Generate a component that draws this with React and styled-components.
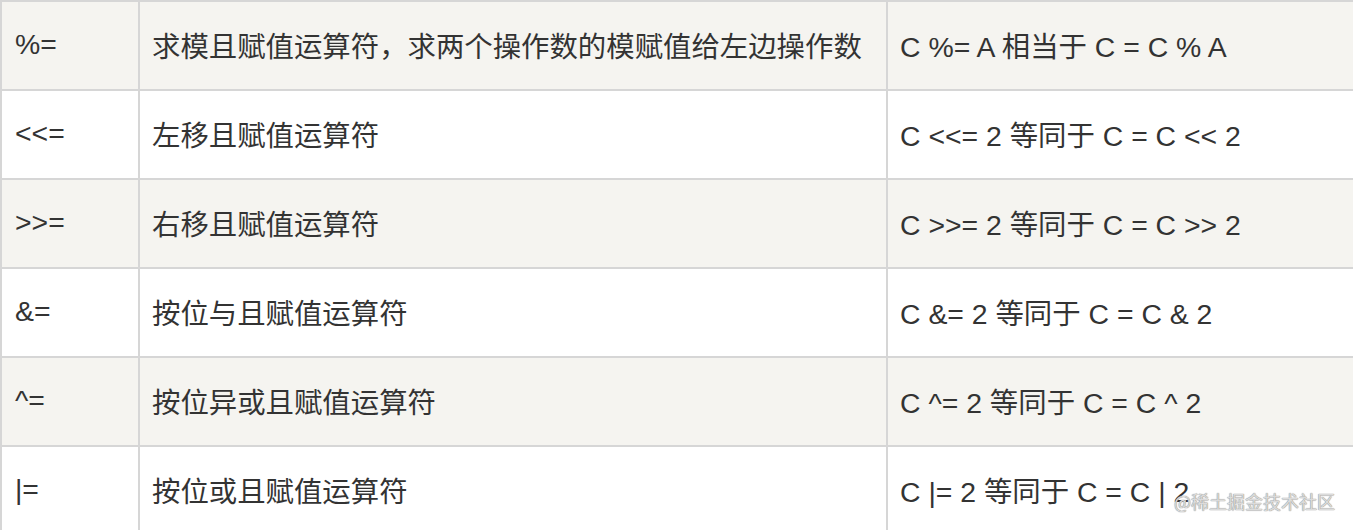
import styled, { createGlobalStyle } from 'styled-components';

const GlobalStyle = createGlobalStyle`
  html, body {
    margin: 0;
    padding: 0;
    background: #ffffff;
    overflow: hidden;
  }
`;

const rows = [
  ['%=', '求模且赋值运算符，求两个操作数的模赋值给左边操作数', 'C %= A 相当于 C = C % A'],
  ['<<=', '左移且赋值运算符', 'C <<= 2 等同于 C = C << 2'],
  ['>>=', '右移且赋值运算符', 'C >>= 2 等同于 C = C >> 2'],
  ['&=', '按位与且赋值运算符', 'C &= 2 等同于 C = C & 2'],
  ['^=', '按位异或且赋值运算符', 'C ^= 2 等同于 C = C ^ 2'],
  ['|=', '按位或且赋值运算符', 'C |= 2 等同于 C = C | 2'],
];

function App() {
  return (
    <Page>
      <GlobalStyle />
      <Table>
        <colgroup>
          <col style={{ width: 138 }} />
          <col style={{ width: 748 }} />
          <col style={{ width: 560 }} />
        </colgroup>
        <tbody>
          {rows.map((r, i) => (
            <Row key={i} $shaded={i % 2 === 0}>
              <Cell $first>{r[0]}</Cell>
              <Cell>{r[1]}</Cell>
              <Cell>{r[2]}</Cell>
            </Row>
          ))}
        </tbody>
      </Table>
      <Watermark>@稀土掘金技术社区</Watermark>
    </Page>
  );
}

export default App;

const Page = styled.div`
  position: relative;
  width: 1353px;
  height: 530px;
  overflow: hidden;
  font-family: "Liberation Sans", "Noto Sans CJK SC", Arial, sans-serif;
`;

const Table = styled.table`
  border-collapse: separate;
  border-spacing: 0;
  table-layout: fixed;
  width: 1448px;
  border-top: 2px solid #d6d6d6;
  border-left: 2px solid #d6d6d6;
`;

const Row = styled.tr`
  background: ${p => (p.$shaded ? '#f5f4f0' : '#ffffff')};
`;

const Cell = styled.td`
  height: 89px;
  padding: 0 0 2px ${p => (p.$first ? '13px' : '12px')};
  box-sizing: border-box;
  border-right: 2px solid #d6d6d6;
  border-bottom: 2px solid #d6d6d6;
  vertical-align: middle;
  font-size: 28.4px;
  color: #333333;
  white-space: nowrap;
  overflow: hidden;
`;

const Watermark = styled.div`
  position: absolute;
  right: 18px;
  bottom: 16px;
  font-family: "Noto Sans CJK SC", sans-serif;
  font-size: 18px;
  color: rgba(225, 225, 225, 0.95);
  text-shadow: 0 0 1px #8c8c8c, 0 0 1px #8c8c8c;
`;
